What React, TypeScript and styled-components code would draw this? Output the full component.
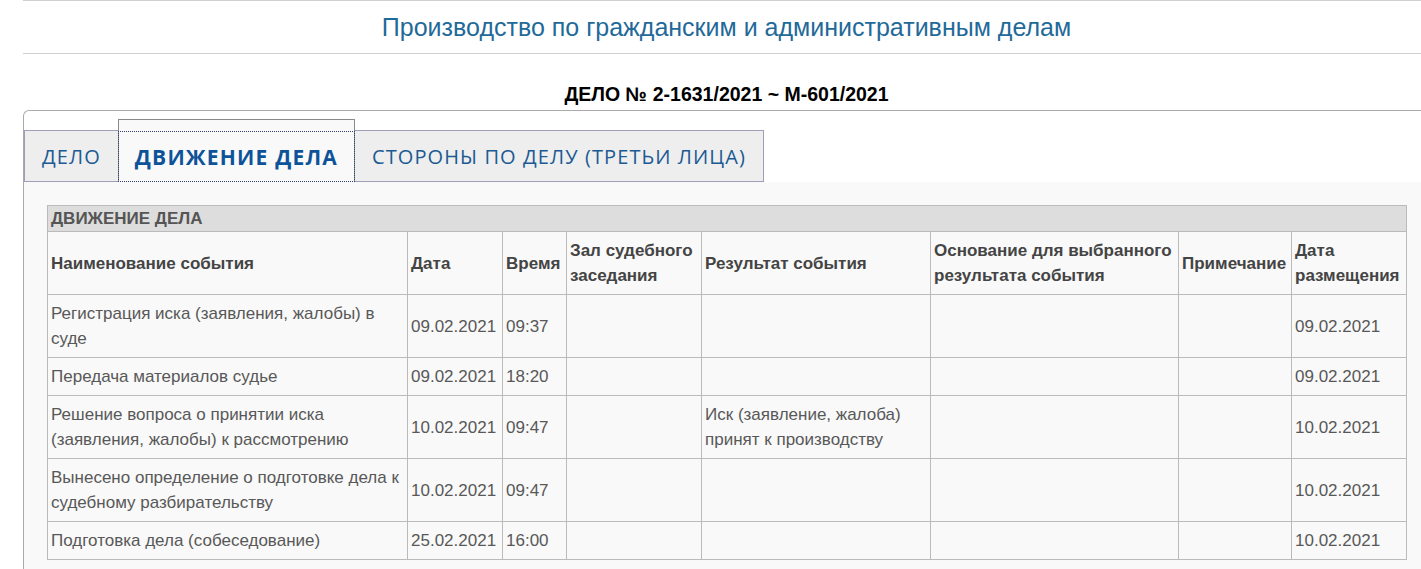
import React from 'react';
import styled, {createGlobalStyle} from 'styled-components';

const GlobalStyle = createGlobalStyle`
    html, body {
        margin: 0;
        padding: 0;
        overflow: hidden;
        background: #fff;
    }
    body {
        font-family: "Liberation Sans", Arial, sans-serif;
    }
`;

const Page = styled.div`
    width: 1407px;
    margin-left: 23px;
`;

const Header = styled.header`
    height: 52px;
    border-top: 1px solid #d0d0d0;
    border-bottom: 1px solid #d0d0d0;
    display: flex;
    align-items: center;
    justify-content: center;
`;

const Title = styled.h1`
    margin: 0;
    font-weight: normal;
    font-size: 25px;
    color: #1f6a99;
`;

const CaseNumber = styled.h2`
    margin: 0;
    height: 56px;
    box-sizing: border-box;
    padding-top: 29px;
    text-align: center;
    font-size: 19.5px;
    line-height: 22px;
    font-weight: bold;
    color: #000;
`;

const TabBox = styled.div`
    border: 1px solid #aaa;
    border-right: none;
    border-bottom: none;
    border-top-left-radius: 6px;
`;

const TabList = styled.ul`
    display: flex;
    align-items: flex-end;
    margin: 0;
    padding: 8px 0 0 0;
    list-style: none;
    font-family: "Open Sans", "Liberation Sans", sans-serif;
`;

const Tab = styled.li<{$active?: boolean}>`
    box-sizing: border-box;
    margin-left: ${({$active}) => ($active ? '-1px' : '0')};
    margin-right: ${({$active}) => ($active ? '-1px' : '0')};
    height: ${({$active}) => ($active ? '63px' : '52px')};
    padding-top: ${({$active}) => ($active ? '11px' : '0')};
    background: ${({$active}) => ($active ? '#f9f9f9' : '#eeeeee')};
    border: 1px solid ${({$active}) => ($active ? '#8a8a8a' : '#9e9eb8')};
    border-bottom: ${({$active}) => ($active ? 'none' : '1px solid #9e9eb8')};
    position: relative;
    z-index: ${({$active}) => ($active ? 1 : 0)};
`;

const TabLink = styled.a<{$active?: boolean}>`
    box-sizing: border-box;
    display: flex;
    align-items: center;
    height: ${({$active}) => ($active ? '51px' : '50px')};
    padding: 0 17px;
    margin: ${({$active}) => ($active ? '0 -1px' : '0')};
    font-size: ${({$active}) => ($active ? '21px' : '20px')};
    letter-spacing: ${({$active}) => ($active ? '1.2px' : '1.1px')};
    font-weight: ${({$active}) => ($active ? 700 : 400)};
    color: ${({$active}) => ($active ? '#0d539a' : '#1b5a94')};
    text-decoration: none;
    outline: ${({$active}) => ($active ? '1px dotted #2c3e6a' : 'none')};
    outline-offset: -1px;
    white-space: nowrap;
`;

const Panel = styled.div`
    background: #f9f9f9;
    padding: 23px 24px 10px 23px;
`;

const Table = styled.table`
    border-collapse: collapse;
    width: 1359px;
    table-layout: fixed;
    font-size: 17px;
    line-height: 25px;
    color: #585858;
`;

const CaptionCell = styled.th`
    background: #dddddd;
    border: 1px solid #bbb;
    padding: 0 3px;
    text-align: left;
    font-weight: bold;
    color: #555;
    height: 25px;
`;

const HeadCell = styled.th`
    border: 1px solid #bbb;
    padding: 6px 3px;
    text-align: left;
    font-weight: bold;
    color: #444;
    vertical-align: middle;
`;

const Cell = styled.td`
    border: 1px solid #bbb;
    padding: 6px 3px;
    vertical-align: middle;
`;

const columns = [
    {title: 'Наименование события', width: 360},
    {title: 'Дата', width: 95},
    {title: 'Время', width: 64},
    {title: 'Зал судебного заседания', width: 135},
    {title: 'Результат события', width: 229},
    {title: 'Основание для выбранного результата события', width: 248},
    {title: 'Примечание', width: 113},
    {title: 'Дата размещения', width: 115},
];

const rows = [
    ['Регистрация иска (заявления, жалобы) в суде', '09.02.2021', '09:37', '', '', '', '', '09.02.2021'],
    ['Передача материалов судье', '09.02.2021', '18:20', '', '', '', '', '09.02.2021'],
    ['Решение вопроса о принятии иска (заявления, жалобы) к рассмотрению', '10.02.2021', '09:47', '', 'Иск (заявление, жалоба) принят к производству', '', '', '10.02.2021'],
    ['Вынесено определение о подготовке дела к судебному разбирательству', '10.02.2021', '09:47', '', '', '', '', '10.02.2021'],
    ['Подготовка дела (собеседование)', '25.02.2021', '16:00', '', '', '', '', '10.02.2021'],
];

const tabs = ['ДЕЛО', 'ДВИЖЕНИЕ ДЕЛА', 'СТОРОНЫ ПО ДЕЛУ (ТРЕТЬИ ЛИЦА)'];

function App() {
    return (
        <>
            <GlobalStyle/>
            <Page>
                <Header>
                    <Title>Производство по гражданским и административным делам</Title>
                </Header>
                <CaseNumber>ДЕЛО № 2-1631/2021 ~ М-601/2021</CaseNumber>
                <TabBox>
                    <TabList>
                        {tabs.map((tab, i) => (
                            <Tab key={tab} $active={i === 1}>
                                <TabLink href="#" $active={i === 1}>{tab}</TabLink>
                            </Tab>
                        ))}
                    </TabList>
                    <Panel>
                        <Table>
                            <colgroup>
                                {columns.map((col) => (
                                    <col key={col.title} style={{width: col.width}}/>
                                ))}
                            </colgroup>
                            <thead>
                            <tr>
                                <CaptionCell colSpan={columns.length}>ДВИЖЕНИЕ ДЕЛА</CaptionCell>
                            </tr>
                            <tr>
                                {columns.map((col) => (
                                    <HeadCell key={col.title}>{col.title}</HeadCell>
                                ))}
                            </tr>
                            </thead>
                            <tbody>
                            {rows.map((row, r) => (
                                <tr key={r}>
                                    {row.map((value, c) => (
                                        <Cell key={c}>{value}</Cell>
                                    ))}
                                </tr>
                            ))}
                            </tbody>
                        </Table>
                    </Panel>
                </TabBox>
            </Page>
        </>
    );
}

export default App;
